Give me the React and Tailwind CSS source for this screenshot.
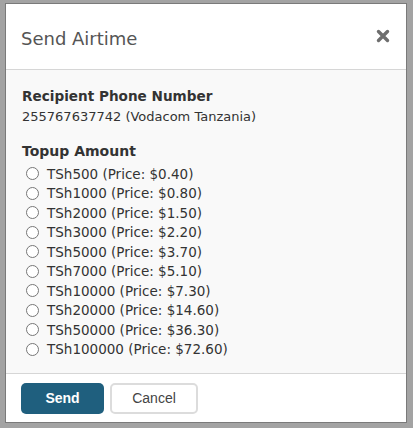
import React, { useState } from 'react';

const amounts = [
  ['500', '0.40'],
  ['1000', '0.80'],
  ['2000', '1.50'],
  ['3000', '2.20'],
  ['5000', '3.70'],
  ['7000', '5.10'],
  ['10000', '7.30'],
  ['20000', '14.60'],
  ['50000', '36.30'],
  ['100000', '72.60'],
];

function App() {
  const [selected, setSelected] = useState(null);

  return (
    <div className="w-[413px] h-[428px] bg-[#a3a3a3] pt-[3px] pl-[5px] font-['Verdana','DejaVu_Sans',sans-serif]">
      <div className="w-[402px] h-[420px] bg-white border border-[#7a7a7a] flex flex-col">
        <div className="h-[66px] flex items-center justify-between pl-[15px] pr-[16px] border-b border-[#d6d6d6] shrink-0">
          <h2 className="text-[18px] text-[#555] mt-[4px]">Send Airtime</h2>
          <button className="mt-[-1px]">
            <svg width="14" height="14" viewBox="0 0 14 14">
              <path d="M2.5 2.5 L11.5 11.5 M11.5 2.5 L2.5 11.5" stroke="#6e6e6e" strokeWidth="3.4" strokeLinecap="round" />
            </svg>
          </button>
        </div>
        <div className="flex-1 bg-[#f9f9f9] border-b border-[#d6d6d6] pl-[16px] pt-[17px]">
          <div className="text-[13.6px] font-bold text-[#333] leading-[18px]">Recipient Phone Number</div>
          <div className="text-[13px] text-[#333] leading-[18px] mt-[3px]">255767637742 (Vodacom Tanzania)</div>
          <div className="text-[14px] font-bold text-[#333] leading-[18px] mt-[16px]">Topup Amount</div>
          <div className="flex flex-col mt-[4px]">
            {amounts.map(([tsh, price]) => (
              <label key={tsh} className="flex items-center h-[19.5px] text-[13.5px] text-[#333] cursor-pointer">
                <input
                  type="radio"
                  name="amount"
                  checked={selected === tsh}
                  onChange={() => setSelected(tsh)}
                  className="w-[13px] h-[13px] ml-[4px] mr-[8px] accent-[#206080]"
                />
                TSh{tsh} (Price: ${price})
              </label>
            ))}
          </div>
        </div>
        <div className="h-[48px] flex items-center gap-[6px] pl-[15px] shrink-0 font-['Liberation_Sans',Arial,sans-serif]">
          <button className="w-[83px] h-[31px] rounded-[5px] bg-[#1f5f7e] text-white text-[14px] font-bold">Send</button>
          <button className="w-[88px] h-[31px] rounded-[5px] bg-white border-2 border-[#dcdcdc] text-[#444] text-[14px]">Cancel</button>
        </div>
      </div>
    </div>
  );
}

export default App;
